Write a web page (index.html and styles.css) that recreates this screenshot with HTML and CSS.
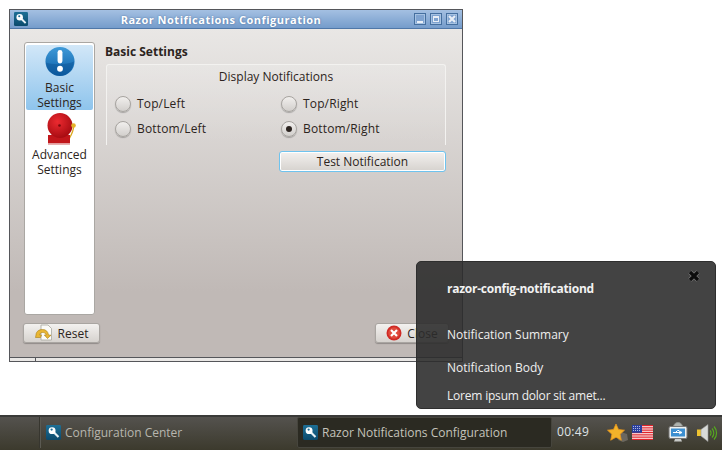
FILE: index.html
```html
<!DOCTYPE html>
<html>
<head>
<meta charset="utf-8">
<title>Razor Notifications Configuration</title>
<link rel="stylesheet" href="styles.css">
</head>
<body>
<svg class="defs" width="0" height="0">
  <defs>
    <linearGradient id="keybg" x1="0" y1="0" x2="0" y2="1"><stop offset="0" stop-color="#1d6f96"/><stop offset="1" stop-color="#0b4a6c"/></linearGradient>
    <symbol id="key" viewBox="0 0 16 16">
      <rect width="16" height="16" rx="1.500" fill="url(#keybg)"/>
      <path d="M7 8l5.500 5.500 1.600-1.600-5.500-5.500z" fill="#e8f1f6"/>
      <circle cx="6.500" cy="6" r="3.700" fill="#fff"/>
      <circle cx="6" cy="4.800" r="1.200" fill="#1d6f96"/>
    </symbol>
  </defs>
</svg>

<main class="window">
  <header class="titlebar">
    <svg class="title-icon"><use href="#key"/></svg>
    <span class="title-text">Razor Notifications Configuration</span>
    <div class="wm-buttons">
      <span class="wm-btn"><i class="wm-min"></i></span>
      <span class="wm-btn"><i class="wm-max"></i></span>
      <span class="wm-btn"><svg viewBox="0 0 8 8" width="8" height="8"><path d="M1 1l6 6M7 1L1 7" stroke="#e8eef6" stroke-width="2.200"/></svg></span>
    </div>
  </header>
  <div class="client">
    <div class="panes">
      <nav class="sidebar">
        <div class="nav-item selected">
          <svg class="nav-icon" width="32" height="32" viewBox="0 0 32 32">
            <defs><linearGradient id="info" x1="0" y1="0" x2="0" y2="1"><stop offset="0" stop-color="#3f9ad8"/><stop offset="1" stop-color="#0c5fa8"/></linearGradient></defs>
            <circle cx="16" cy="16" r="15" fill="url(#info)"/>
            <path d="M1.500 17c6 2.500 22 2.500 29-1-1 8-7 15-14.500 15S2 25 1.500 17z" fill="#0b4f91" opacity=".45"/>
            <rect x="13.500" y="4" width="5" height="14" rx="2.500" fill="#fff"/>
            <circle cx="16" cy="23.500" r="3" fill="#fff"/>
          </svg>
          <span>Basic<br>Settings</span>
        </div>
        <div class="nav-item">
          <svg class="nav-icon" width="32" height="32" viewBox="0 0 32 32">
            <defs><radialGradient id="bell" cx=".4" cy=".35" r=".7"><stop offset="0" stop-color="#ec2a30"/><stop offset="1" stop-color="#a30a10"/></radialGradient></defs>
            <path d="M29.500 14c0 5-3 9-5.500 14" stroke="#dba91f" stroke-width="1.300" fill="none"/>
            <rect x="4" y="22" width="22" height="8.500" fill="#c1161b"/>
            <rect x="4" y="30.500" width="22" height="1.500" fill="#e8b0b0"/>
            <circle cx="16" cy="12.500" r="12.500" fill="url(#bell)"/>
            <circle cx="15.500" cy="12.500" r="1.300" fill="#7c0a0e"/>
            <circle cx="29.500" cy="12.500" r="2.300" fill="#e4b22a"/>
          </svg>
          <span>Advanced<br>Settings</span>
        </div>
      </nav>
      <section class="page">
        <h2 class="page-title">Basic Settings</h2>
        <fieldset class="group">
          <div class="group-title">Display Notifications</div>
          <div class="radio-grid">
            <label class="radio"><i class="dot"></i>Top/Left</label>
            <label class="radio"><i class="dot"></i>Top/Right</label>
            <label class="radio"><i class="dot"></i>Bottom/Left</label>
            <label class="radio"><i class="dot on"></i>Bottom/Right</label>
          </div>
        </fieldset>
        <div class="test-row"><button class="btn focus">Test Notification</button></div>
      </section>
    </div>
    <div class="actions">
      <button class="btn action reset">
        <svg width="18" height="18" viewBox="0 0 18 18">
          <path d="M6 1h7l3.500 3.500V16H6z" fill="#fbfbf8" stroke="#a8a89f" stroke-width=".8"/>
          <path d="M1 11c0-3.500 3-5.500 6.500-5.500s5.500 2 6 5.500l2.500.2-3.500 3.300-3.200-3.500 1.900 0C10.500 9 9.500 8.500 7.500 8.500 6 8.500 5 9.300 4.700 11h1.800l-1 2.500H.5z" fill="#e9b634" stroke="#a87d14" stroke-width=".6"/>
        </svg>
        <span>Reset</span>
      </button>
      <button class="btn action close">
        <svg width="16" height="16" viewBox="0 0 16 16">
          <circle cx="8" cy="8" r="7.500" fill="#cf2a25"/>
          <circle cx="8" cy="8" r="5.800" fill="#e04a3c"/>
          <path d="M5 5l6 6M11 5l-6 6" stroke="#fff" stroke-width="2.200"/>
        </svg>
        <span>Close</span>
      </button>
    </div>
  </div>
  <div class="statusbar"><i></i></div>
</main>

<aside class="notification">
  <svg class="notif-close" width="14" height="14" viewBox="0 0 14 14"><path d="M3 3l8 8M11 3l-8 8" stroke="#777" stroke-width="4.600"/><path d="M3 3l8 8M11 3l-8 8" stroke="#0c0c0c" stroke-width="3.200"/></svg>
  <div class="notif-app">razor-config-notificationd</div>
  <div class="notif-summary">Notification Summary</div>
  <div class="notif-body">Notification Body</div>
  <div class="notif-lorem">Lorem ipsum dolor sit amet...</div>
</aside>

<footer class="taskbar">
  <div class="task-start"></div>
  <div class="task"><svg class="task-icon"><use href="#key"/></svg><span>Configuration Center</span></div>
  <div class="task active"><svg class="task-icon"><use href="#key"/></svg><span>Razor Notifications Configuration</span></div>
  <div class="clock">00:49</div>
  <div class="tray">
    <svg class="tray-star" width="22" height="20" viewBox="0 0 22 20">
      <path d="M14 9l6 2 1 6-5 2-5-2z" fill="#6b675f"/>
      <path d="M9 1l2.500 5.500 6 .7-4.400 4 1.200 6L9 14.200 3.700 17.200l1.200-6L.5 7.200l6-.7z" fill="#f3b32a" stroke="#e8951c" stroke-width=".8"/>
    </svg>
    <svg class="tray-flag" width="21" height="15" viewBox="0 0 21 15">
      <rect width="21" height="15" fill="#fff"/>
      <path d="M0 .6h21M0 2.900h21M0 5.200h21M0 7.500h21M0 9.800h21M0 12.100h21M0 14.400h21" stroke="#e0232a" stroke-width="1.300"/>
      <rect width="10" height="7.800" fill="#2a3f9e"/>
      <path d="M1 1.500h8M1 3.500h8M1 5.500h8" stroke="#cfd6f0" stroke-width=".8" stroke-dasharray="1 1"/>
    </svg>
    <svg class="tray-usb" width="20" height="22" viewBox="0 0 20 22">
      <path d="M5.500 5a4.500 4.500 0 0 1 9 0" fill="#aeb2ae" stroke="#8d908c"/>
      <rect x="1" y="4.500" width="18" height="12" rx="1.500" fill="#eef0ee" stroke="#777"/>
      <rect x="3" y="6.500" width="14" height="8" fill="#3d8fd0"/>
      <path d="M5 10.500h9M11 9l3 1.500-3 1.500M7.500 10.500l2-2h1.500" stroke="#fff" stroke-width="1" fill="none"/>
      <path d="M7 17h6l1 2.500H6z" fill="#c8cac8"/>
    </svg>
    <svg class="tray-vol" width="22" height="20" viewBox="0 0 22 20">
      <rect x="1" y="6.500" width="4" height="6.500" fill="#eec330"/>
      <path d="M5 6.500L12 1.500v17L5 13z" fill="#d8dad8" stroke="#999" stroke-width=".6"/>
      <path d="M14 7.500a3.500 3.500 0 0 1 0 5M16 5.500a6.500 6.500 0 0 1 0 9M18 3.500a9.500 9.500 0 0 1 0 13" stroke="#55a81f" stroke-width="1.200" fill="none"/>
    </svg>
  </div>
</footer>
</body>
</html>
```
FILE: styles.css
```css
* { box-sizing: border-box; }
html, body { margin: 0; padding: 0; }
body {
  width: 722px;
  height: 450px;
  background: #fff;
  position: relative;
  overflow: hidden;
  font-family: "Open Sans", "Noto Sans", sans-serif;
  font-size: 12px;
  color: #2c2420;
}
.defs { position: absolute; }

/* window */
.window {
  position: absolute;
  left: 9px;
  top: 9px;
  width: 454px;
  height: 353px;
  border: 1px solid #55565a;
  display: flex;
  flex-direction: column;
}
.titlebar {
  height: 19px;
  flex: none;
  display: flex;
  align-items: center;
  padding: 0 4px;
  background: linear-gradient(#a4c0e2, #759ccb);
  border-bottom: 1px solid #4f77a8;
}
.title-icon { width: 14px; height: 14px; flex: none; }
.title-text {
  flex: 1;
  text-align: center;
  color: #fff;
  font-weight: 700;
  font-size: 11px;
  letter-spacing: .5px;
  text-shadow: 0 0 2px #4a6e9c;
}
.wm-buttons { display: flex; gap: 4px; }
.wm-btn {
  width: 12px;
  height: 12px;
  background: #7fa3d0;
  border: 1px solid #456f9f;
  box-shadow: inset 0 0 0 1px #a6c2e2;
  display: flex;
  align-items: center;
  justify-content: center;
}
.wm-min { width: 6px; height: 2px; background: #e8eef6; margin-top: 5px; }
.wm-max { width: 6px; height: 6px; border: 1px solid #e8eef6; border-top-width: 2px; }

.client {
  flex: 1;
  min-height: 0;
  display: flex;
  flex-direction: column;
  padding: 13px 2px 14px 13px;
  background: linear-gradient(#e9e7e5, #c0b9b6 80%);
}
.panes { flex: 1; min-height: 0; display: flex; gap: 10px; }
.sidebar {
  width: 71px;
  margin-left: 1px;
  flex: none;
  background: #fff;
  border: 1px solid #aaa7a3;
  border-radius: 3px;
  padding: 2px 1px;
  display: flex;
  flex-direction: column;
}
.nav-item {
  display: flex;
  flex-direction: column;
  align-items: center;
  text-align: center;
  line-height: 15px;
  font-size: 12px;
  color: #2c2420;
}
.nav-item.selected {
  height: 65px;
  background: linear-gradient(#d2e7f8, #8ec4ec);
  border-radius: 2px;
}
.nav-item + .nav-item { height: 68px; padding-top: 3px; }
.nav-item span { margin-top: 2px; }
.nav-item.selected span { margin-top: 3px; }
.nav-item.selected .nav-icon { margin-top: 1px; }

.page { flex: 1; min-width: 0; display: flex; flex-direction: column; }
.page-title {
  margin: 2px 0 5px;
  font-size: 12px;
  line-height: 15px;
  font-weight: 700;
  color: #2c2420;
}
.group {
  margin: 0 0 0 1px;
  padding: 4px 8px 0;
  width: 340px;
  height: 81px;
  border: 1px solid #f3f2f0;
  border-bottom: 0;
  border-radius: 3px 3px 0 0;
  background: linear-gradient(rgba(255,255,255,.16), rgba(255,255,255,0));
  min-width: 0;
}
.group-title { text-align: center; line-height: 15px; font-size: 12px; }
.radio-grid {
  display: grid;
  grid-template-columns: 166px 1fr;
  row-gap: 7px;
  margin-top: 11px;
}
.radio {
  display: flex;
  align-items: center;
  gap: 6px;
  height: 18px;
  line-height: 18px;
  letter-spacing: .15px;
}
.dot {
  width: 16px;
  height: 16px;
  border-radius: 50%;
  background: linear-gradient(#f1efed, #d2cfcc);
  border: 1px solid #a7a4a0;
  box-shadow: 0 1px 1px rgba(0,0,0,.25);
  display: flex;
  align-items: center;
  justify-content: center;
}
.dot.on::after {
  content: "";
  width: 6px;
  height: 6px;
  background: #2c2420;
  border-radius: 50%;
}
.test-row { display: flex; justify-content: flex-end; margin-top: 6px; width: 341px; }
.btn {
  font: inherit;
  color: #2c2420;
  height: 20px;
  padding: 0;
  border: 1px solid #a9a5a1;
  border-radius: 3px;
  background: linear-gradient(#f3f1ef, #d6d2ce);
  display: flex;
  align-items: center;
  justify-content: center;
}
.btn.focus {
  width: 167px;
  height: 21px;
  border-color: #6fc3ee;
  box-shadow: inset 0 0 0 1px #fff;
}
.actions { flex: none; display: flex; justify-content: space-between; margin-top: 8px; }
.action { box-shadow: 0 1px 1px rgba(0,0,0,.25); }
.reset { width: 77px; gap: 5px; }
.close { width: 74px; margin-right: 11px; gap: 5px; }
.statusbar {
  height: 4px;
  flex: none;
  background: #e9e7e5;
  border-top: 1px solid #55565a;
}
.statusbar i { display: block; width: 1px; height: 3px; margin-left: 25px; background: #55565a; }

/* notification */
.notification {
  position: absolute;
  left: 416px;
  top: 261px;
  width: 300px;
  height: 148px;
  background: rgba(44, 44, 44, .89);
  border: 1px solid #2e2e2e;
  border-radius: 5px;
  color: #efefef;
  padding: 19px 0 0 30px;
  line-height: 15px;
}
.notif-close { position: absolute; right: 14px; top: 7px; }
.notif-app { font-weight: 700; color: #f2f2f2; letter-spacing: -.25px; }
.notif-summary { margin-top: 31px; }
.notif-body { margin-top: 18px; }
.notif-lorem { margin-top: 13px; letter-spacing: -.2px; }

/* taskbar */
.taskbar {
  position: absolute;
  left: 0;
  top: 415px;
  width: 722px;
  height: 35px;
  display: flex;
  align-items: stretch;
  background: linear-gradient(#54524e, #3c3a2d);
  border-top: 2px solid #3a3a38;
  padding-bottom: 2px;
  color: #b7b6ae;
}
.task-start { width: 40px; flex: none; border-right: 1px solid #37362f; }
.task {
  width: 258px;
  flex: none;
  display: flex;
  align-items: center;
  gap: 4px;
  padding-left: 5px;
  border-left: 1px solid #5b5a52;
}
.task.active {
  width: 255px;
  margin-left: -1px;
  background: #2b2a22;
  border: 1px solid #46453d;
  border-radius: 2px;
  color: #c4c3bb;
}
.task-icon { width: 15px; height: 15px; flex: none; }
.clock { width: 47px; flex: none; padding-left: 5px; line-height: 30px; color: #dfe3e6; font-size: 12px; letter-spacing: .3px; }
.tray { flex: 1; display: flex; align-items: center; }
.tray-star { margin-left: 8px; }
.tray-flag { margin-left: 3px; }
.tray-usb { margin-left: 15px; }
.tray-vol { margin-left: 8px; }
```
